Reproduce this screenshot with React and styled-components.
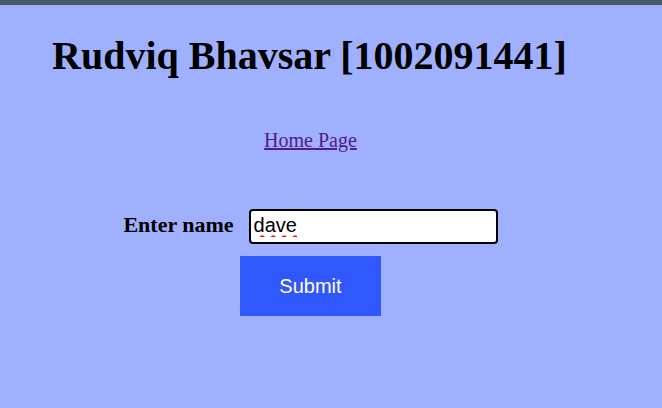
import React from "react";
import styled, { createGlobalStyle } from "styled-components";

const GlobalStyle = createGlobalStyle`
  html, body {
    margin: 0;
    padding: 0;
    background: #9fb0fe;
  }
  body {
    font-family: "Liberation Serif", "Times New Roman", serif;
  }
`;

const TopBar = styled.div`
  height: 5px;
  background: #4b5a68;
`;

const Page = styled.div`
  width: 621px;
  min-height: 403px;
  display: flex;
  flex-direction: column;
  align-items: center;
`;

const Title = styled.h1`
  align-self: flex-start;
  margin: 28px 0 0 52px;
  font-size: 40px;
  line-height: 46px;
  font-weight: bold;
  color: #000;
`;

const HomeLink = styled.a`
  margin-top: 50px;
  font-size: 20px;
  line-height: 23px;
  color: #551a8b;
  text-decoration: underline;
`;

const FormRow = styled.form`
  margin-top: 57px;
  display: flex;
  flex-direction: column;
  align-items: center;
  gap: 12px;
`;

const Field = styled.div`
  display: flex;
  align-items: center;
  gap: 15px;
`;

const Label = styled.label`
  font-size: 22px;
  line-height: 25px;
  font-weight: bold;
  margin-bottom: 4px;
`;

const NameInput = styled.input`
  box-sizing: border-box;
  width: 249px;
  height: 35px;
  padding: 0 3px 2px;
  border: 2px solid #000;
  border-radius: 4px;
  background: #fff;
  font-family: "Liberation Sans", Arial, sans-serif;
  font-size: 20px;
  color: #000;
  outline: none;
  text-decoration: underline wavy #e01818;
  text-decoration-thickness: 1.5px;
  text-underline-offset: 3px;
`;

const SubmitButton = styled.button`
  width: 141px;
  height: 60px;
  border: none;
  background: #2f57fb;
  color: #fff;
  font-family: "Liberation Sans", Arial, sans-serif;
  font-size: 20px;
`;

export default function App() {
  return (
    <>
      <GlobalStyle />
      <TopBar />
      <Page>
        <Title>Rudviq Bhavsar [1002091441]</Title>
        <HomeLink href="#home">Home Page</HomeLink>
        <FormRow onSubmit={(e) => e.preventDefault()}>
          <Field>
            <Label htmlFor="name">Enter name</Label>
            <NameInput id="name" defaultValue="dave" />
          </Field>
          <SubmitButton type="submit">Submit</SubmitButton>
        </FormRow>
      </Page>
    </>
  );
}
